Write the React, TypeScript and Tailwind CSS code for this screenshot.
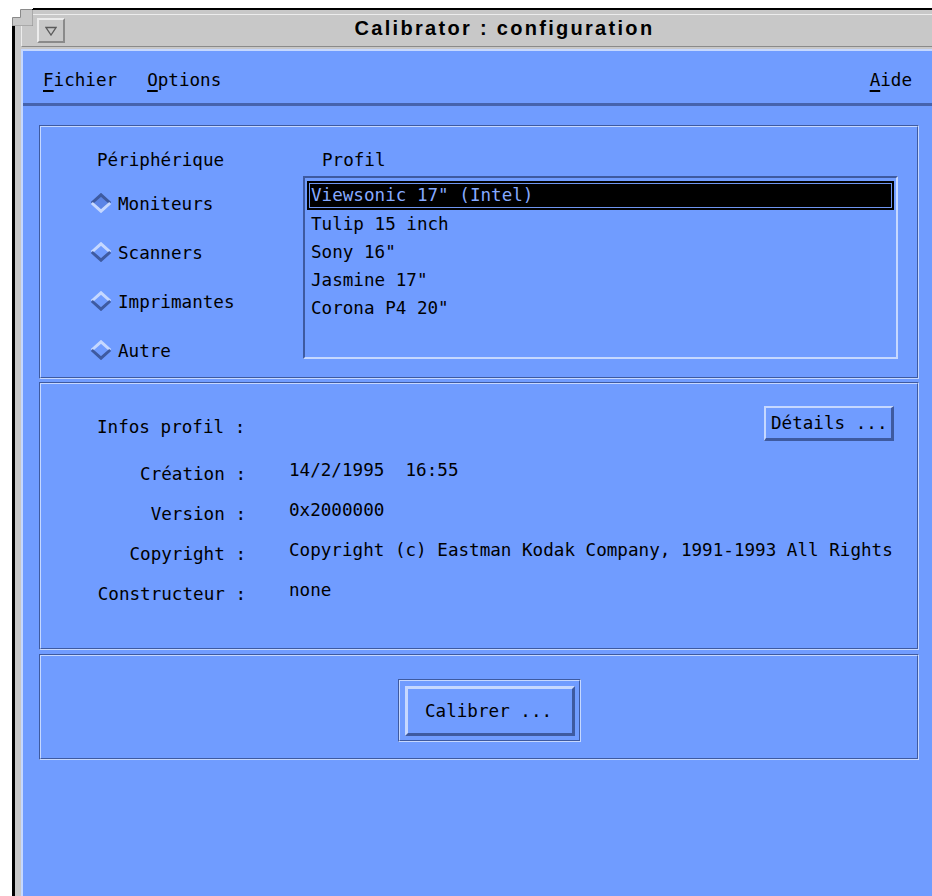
import React from 'react';

// X11 / Motif style palette
const mono = "font-['DejaVu_Sans_Mono','Liberation_Mono',monospace] text-[17.6px] text-black";

const devices = [
  { label: 'Moniteurs', on: true },
  { label: 'Scanners', on: false },
  { label: 'Imprimantes', on: false },
  { label: 'Autre', on: false },
];

const profiles = ['Viewsonic 17" (Intel)', 'Tulip 15 inch', 'Sony 16"', 'Jasmine 17"', 'Corona P4 20"'];

const infos = [
  { label: 'Création :', value: '14/2/1995  16:55' },
  { label: 'Version :', value: '0x2000000' },
  { label: 'Copyright :', value: 'Copyright (c) Eastman Kodak Company, 1991-1993 All Rights' },
  { label: 'Constructeur :', value: 'none' },
];

// etched-in frame: dark/light outer line, light/dark inner line
const Etched: React.FC<{ className?: string; children?: React.ReactNode }> = ({ className = '', children }) => (
  <div className={`border border-t-[#3e5aa0] border-l-[#3e5aa0] border-b-[#c6d8ff] border-r-[#c6d8ff] ${className}`}>
    <div className="h-full border border-t-[#c6d8ff] border-l-[#c6d8ff] border-b-[#3e5aa0] border-r-[#3e5aa0]">
      {children}
    </div>
  </div>
);

const Diamond: React.FC<{ on: boolean }> = ({ on }) => (
  <svg width="22" height="20" viewBox="0 0 22 20" className="shrink-0">
    <polygon points="11,1 21,10 11,19 1,10" fill={on ? '#5b84e6' : '#709cff'} />
    <polyline points="1.8,10 11,1.8 20.2,10" fill="none" stroke={on ? '#3e5aa0' : '#c6d8ff'} strokeWidth="3" />
    <polyline points="1.8,10 11,18.2 20.2,10" fill="none" stroke={on ? '#c6d8ff' : '#3e5aa0'} strokeWidth="3" />
  </svg>
);

const MenuItem: React.FC<{ first: string; rest: string }> = ({ first, rest }) => (
  <span className={mono}>
    <span className="underline underline-offset-[4px] decoration-[1.5px]">{first}</span>
    {rest}
  </span>
);

export default function App() {
  return (
    <div className="w-[932px] h-[896px] overflow-hidden bg-white pt-[8px] pl-[12px]">
      <div className="relative w-[920px] h-[888px] border-t-2 border-l-[3px] border-black bg-[#c8c8c8] pl-[6px] pt-[4px]">
        {/* resize corner of the frame */}
        <svg width="21" height="18" viewBox="0 0 21 18" className="absolute -left-[3px] -top-[2px]">
          <rect width="21" height="18" fill="#ffffff" />
          <polygon points="0.5,18 0.5,9.5 8.5,9.5 8.5,1.5 21,1.5 21,18" fill="#c8c8c8" stroke="#8a8a8a" />
          <line x1="21" y1="1" x2="21" y2="2" stroke="#000" strokeWidth="2" />
        </svg>

        {/* title bar */}
        <div className="h-[33px] flex items-center border-t border-l border-t-[#ececec] border-l-[#ececec] border-b border-b-[#8a8a8a]">
          <div className="ml-[15px] w-[28px] h-[25px] flex items-center justify-center border-t-2 border-l-2 border-t-[#ececec] border-l-[#ececec] border-b-2 border-r-2 border-b-[#8a8a8a] border-r-[#8a8a8a]">
            <svg width="12" height="10" viewBox="0 0 12 10">
              <polygon points="1,1.5 11,1.5 6,9" fill="none" stroke="#5a5a5a" strokeWidth="1.3" />
            </svg>
          </div>
          <div className="flex-1 flex justify-center pl-[12px] pb-[5px]">
            <span className="font-['Liberation_Sans',Arial,sans-serif] font-bold text-[20px] leading-[24px] tracking-[2.3px] text-black">
              Calibrator : configuration
            </span>
          </div>
        </div>

        {/* client area */}
        <div className="mt-[2px] h-full border-t-2 border-l-2 border-t-[#c6d8ff] border-l-[#c6d8ff] bg-[#709cff]">
          <div className="h-[55px] flex items-center justify-between pl-[20px] pr-[20px] pt-[7px] border-b-[3px] border-b-[#4663ad]">
            <div className="flex gap-[30px]">
              <MenuItem first="F" rest="ichier" />
              <MenuItem first="O" rest="ptions" />
            </div>
            <MenuItem first="A" rest="ide" />
          </div>

          <div className="pl-[16px] pt-[19px] w-[896px]">
            {/* device + profile */}
            <Etched className="h-[254px]">
              <div className="flex h-full">
                <div className="w-[262px] pl-[49px] pt-[21px]">
                  <div className={`${mono} ml-[7px] leading-[24px]`}>Périphérique</div>
                  <div className="mt-[19px] flex flex-col gap-[25px]">
                    {devices.map((d) => (
                      <div key={d.label} className="h-[24px] flex items-center gap-[6px]">
                        <Diamond on={d.on} />
                        <span className={`${mono} leading-[24px] pt-[1px]`}>{d.label}</span>
                      </div>
                    ))}
                  </div>
                </div>
                <div className="flex-1 pt-[21px] pr-[19px]">
                  <div className={`${mono} ml-[19px] leading-[24px]`}>Profil</div>
                  <div className="mt-[4px] h-[183px] border-2 border-t-[#3e5aa0] border-l-[#3e5aa0] border-b-[#c6d8ff] border-r-[#c6d8ff] px-[2px] pt-[3px]">
                    {profiles.map((p, i) =>
                      i === 0 ? (
                        <div key={p} className="h-[29px] bg-black p-[2px]">
                          <div className={`${mono} h-full border border-[#6f95f0] pl-[1px] leading-[23px] !text-[#86aaff]`}>{p}</div>
                        </div>
                      ) : (
                        <div key={p} className={`${mono} h-[28px] leading-[28px] pl-[4px]`}>{p}</div>
                      )
                    )}
                  </div>
                </div>
              </div>
            </Etched>

            {/* profile info */}
            <Etched className="mt-[3px] h-[268px]">
              <div className="pt-[22px] pl-[56px] pr-[23px] flex justify-between items-start">
                <span className={`${mono} mt-[9px] leading-[24px]`}>Infos profil :</span>
                <div className="w-[130px] h-[35px] flex items-center pl-[5px] border-t-2 border-l-2 border-t-[#c6d8ff] border-l-[#c6d8ff] border-b-[3px] border-r-[3px] border-b-[#3e5aa0] border-r-[#3e5aa0]">
                  <span className={`${mono} leading-[24px]`}>Détails ...</span>
                </div>
              </div>
              <div className="mt-[17px] grid grid-cols-[205px_1fr] gap-x-[43px]">
                {infos.map((f) => (
                  <React.Fragment key={f.label}>
                    <div className={`${mono} h-[40px] pt-[4px] leading-[24px] text-right`}>{f.label}</div>
                    <div className={`${mono} h-[40px] leading-[24px] whitespace-pre`}>{f.value}</div>
                  </React.Fragment>
                ))}
              </div>
            </Etched>

            {/* action */}
            <Etched className="mt-[4px] h-[106px]">
              <div className="pt-[23px] pl-[357px]">
                <Etched className="w-[183px] h-[63px]">
                  <div className="p-[5px] pr-[4px] pb-[4px] h-full">
                    <div className="h-full flex items-center pl-[17px] border-t-[3px] border-l-[3px] border-t-[#c6d8ff] border-l-[#c6d8ff] border-b-[3px] border-r-[3px] border-b-[#3e5aa0] border-r-[#3e5aa0]">
                      <span className={`${mono} leading-[24px]`}>Calibrer ...</span>
                    </div>
                  </div>
                </Etched>
              </div>
            </Etched>
          </div>
        </div>
      </div>
    </div>
  );
}
